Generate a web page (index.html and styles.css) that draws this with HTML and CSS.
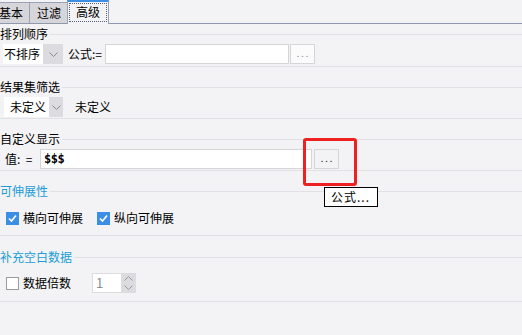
FILE: index.html
```html
<!DOCTYPE html>
<html lang="zh">
<head>
    <meta charset="UTF-8">
    <title>高级</title>
    <link rel="stylesheet" href="styles.css">
</head>
<body>
    <div class="tabs">
        <div class="tab">基本</div>
        <div class="tab">过滤</div>
        <div class="tab active"><span class="focus">高级</span></div>
    </div>

    <div class="section s1">
        <div class="legend">排列顺序</div>
        <div class="row">
            <div class="select sort">
                <span class="value">不排序</span>
                <span class="arrow"><svg width="9" height="5" viewBox="0 0 9 5"><path d="M0.5 0.5 L4.5 4.5 L8.5 0.5" fill="none" stroke="#8a8a8a" stroke-width="1"/></svg></span>
            </div>
            <span class="label formula">公式:=</span>
            <div class="input wide"></div>
            <div class="more light">. . .</div>
        </div>
    </div>

    <div class="section s2">
        <div class="legend">结果集筛选</div>
        <div class="row">
            <div class="select filter">
                <span class="value">未定义</span>
                <span class="arrow"><svg width="9" height="5" viewBox="0 0 9 5"><path d="M0.5 0.5 L4.5 4.5 L8.5 0.5" fill="none" stroke="#8a8a8a" stroke-width="1"/></svg></span>
            </div>
            <span class="label undefined">未定义</span>
        </div>
    </div>

    <div class="section s3">
        <div class="legend">自定义显示</div>
        <div class="row">
            <span class="label value-label">值: &nbsp;=</span>
            <div class="input display"><span class="mono">$$$</span></div>
            <div class="more">. . .</div>
        </div>
    </div>

    <div class="section s4">
        <div class="legend blue">可伸展性</div>
        <div class="row checks">
            <label class="check">
                <span class="box checked"><svg width="13" height="13" viewBox="0 0 13 13"><path d="M3 6.5 L5.5 9 L10 3.5" fill="none" stroke="#fff" stroke-width="1.6"/></svg></span>
                横向可伸展
            </label>
            <label class="check">
                <span class="box checked"><svg width="13" height="13" viewBox="0 0 13 13"><path d="M3 6.5 L5.5 9 L10 3.5" fill="none" stroke="#fff" stroke-width="1.6"/></svg></span>
                纵向可伸展
            </label>
        </div>
    </div>

    <div class="section s5">
        <div class="legend blue">补充空白数据</div>
        <div class="row">
            <label class="check">
                <span class="box"></span>
                数据倍数
            </label>
            <div class="spinner">
                <span class="spin-value">1</span>
                <span class="spin-buttons">
                    <svg width="9" height="5" viewBox="0 0 9 5"><path d="M0.5 4.5 L4.5 0.5 L8.5 4.5" fill="none" stroke="#9a9a9a" stroke-width="1"/></svg>
                    <svg width="9" height="5" viewBox="0 0 9 5"><path d="M0.5 0.5 L4.5 4.5 L8.5 0.5" fill="none" stroke="#9a9a9a" stroke-width="1"/></svg>
                </span>
            </div>
        </div>
    </div>

    <!-- annotation over the "..." button and its tooltip -->
    <div class="highlight"></div>
    <div class="tooltip">公式...</div>
</body>
</html>
```

FILE: styles.css
```css
* {
    margin: 0;
    padding: 0;
    box-sizing: border-box;
}

body {
    position: relative;
    width: 522px;
    height: 335px;
    overflow: hidden;
    background: #f3f3f5;
    font-family: "Noto Sans CJK SC", "Noto Sans", sans-serif;
    font-size: 12px;
    line-height: 14px;
    color: #000;
}

/* tab strip */
.tabs {
    display: flex;
    align-items: flex-end;
    height: 24px;
    margin-left: -9px;
    border-bottom: 1px solid #8e99ad;
}

.tab {
    height: 21px;
    padding: 3px 6px 0 7px;
    background: #d6d6da;
    border: 1px solid #9aa3b4;
    border-bottom: none;
    border-right: none;
}

.tab.active {
    height: 24px;
    margin-bottom: -1px;
    padding: 1px 1px 0;
    background: #f3f3f5;
    border-top: 2px solid #3c8fe3;
    border-right: 1px solid #9aa3b4;
}

.focus {
    display: block;
    padding: 1px 6px 2px;
    border: 1px dotted #56607a;
    line-height: 14px;
}

/* sections */
.section {
    border-bottom: 1px solid #e1e1e5;
}

.s1 { padding: 3px 0 2px; }
.s2 { padding: 13px 0 1px; }
.s3 { padding: 13px 0 1px; }
.s4 { padding: 13px 0 7px; }
.s5 { padding: 14px 0 8px; }

.legend {
    display: flex;
    align-items: center;
    height: 14px;
    white-space: nowrap;
}

.legend::after {
    content: "";
    flex: 1;
    height: 1px;
    margin-left: 2px;
    background: #e1e1e5;
}

.legend.blue {
    color: #1b9dd8;
}

.row {
    display: flex;
    align-items: center;
    height: 20px;
    margin-top: 3px;
    padding-left: 3px;
}

.s4 .row {
    margin-top: 10px;
}

.s5 .row {
    margin-top: 9px;
}

/* combo boxes */
.select {
    display: flex;
    height: 20px;
}

.select .value {
    display: flex;
    align-items: center;
    background: #fff;
}

.select .arrow {
    display: flex;
    align-items: center;
    justify-content: center;
    background: #dcdce0;
}

.sort .value { width: 40px; padding-left: 1px; }
.sort .arrow { width: 20px; }

.filter { margin-left: 1px; }
.filter .value { width: 45px; padding-left: 6px; }
.filter .arrow { width: 14px; }

.label.formula { margin-left: 5px; }
.label.undefined { margin-left: 12px; }
.label.value-label { margin-left: 2px; width: 35px; }

.input {
    height: 20px;
    background: #fff;
    border: 1px solid #d5d5d8;
}

.input.wide {
    width: 184px;
    margin-left: 3px;
}

.input.display {
    display: flex;
    align-items: center;
    width: 272px;
    padding-left: 3px;
}

.mono {
    font-family: "DejaVu Sans Mono", monospace;
    font-size: 12px;
    font-weight: bold;
    letter-spacing: -0.5px;
}

.more {
    display: flex;
    align-items: center;
    justify-content: center;
    width: 25px;
    height: 20px;
    border: 1px solid #d5d5d8;
    font-size: 9px;
    color: #222;
}

.more.light {
    margin-left: 1px;
    background: #fbfbfb;
    color: #8a8a8a;
}

.s3 .more {
    margin-left: 2px;
    margin-top: -1px;
}

/* check boxes */
.check {
    display: flex;
    align-items: center;
    gap: 4px;
    margin-left: 3px;
}

.check + .check {
    margin-left: 14px;
}

.box {
    display: block;
    width: 13px;
    height: 13px;
    background: #fff;
    border: 1px solid #9b9b9b;
}

.box.checked {
    background: #3b8ee6;
    border: none;
}

.box svg {
    display: block;
}

/* number spinner */
.spinner {
    display: flex;
    height: 20px;
    margin-left: 21px;
    border: 1px solid #dcdce0;
}

.spin-value {
    display: flex;
    align-items: center;
    width: 28px;
    padding-left: 3px;
    background: #fff;
    color: #8c8c8c;
    font-size: 13px;
}

.spin-buttons {
    display: flex;
    flex-direction: column;
    justify-content: center;
    align-items: center;
    gap: 4px;
    width: 14px;
    background: #dcdce0;
}

.spin-buttons svg {
    display: block;
}

/* overlays */
.highlight {
    position: absolute;
    left: 303px;
    top: 138px;
    width: 54px;
    height: 48px;
    border: 3px solid #ee2020;
    border-radius: 3px;
}

.tooltip {
    position: absolute;
    left: 324px;
    top: 187px;
    width: 54px;
    height: 20px;
    padding: 2px 0 0 6px;
    background: #fff;
    border: 1px solid #000;
    letter-spacing: 1px;
}
```
